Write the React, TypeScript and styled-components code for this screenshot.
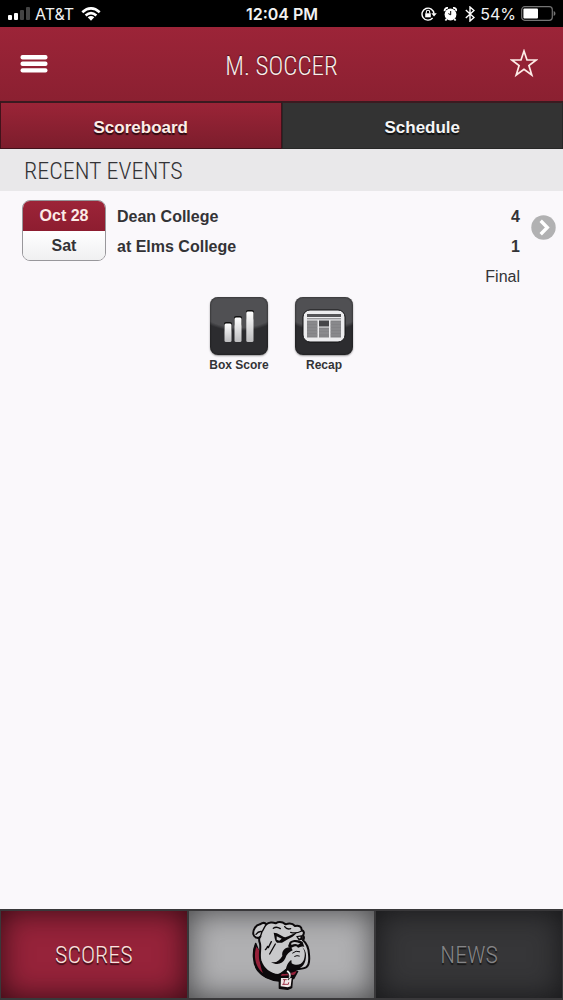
import React from 'react';
import styled, { createGlobalStyle } from 'styled-components';

const sans = `"Liberation Sans", Arial, sans-serif`;
const narrow = `"Liberation Sans Narrow", "Roboto Condensed", Roboto, sans-serif`;

const GlobalStyle = createGlobalStyle`
  * { box-sizing: border-box; }
  body { margin: 0; background: #faf8fb; color: #333336; font-family: ${sans}; }
  button { font: inherit; color: inherit; border: 0; padding: 0; background: none; cursor: pointer; }
  a { color: inherit; text-decoration: none; }
  h1, h2, p { margin: 0; font-weight: 400; }
  svg { display: block; }
`;

const Page = styled.div`
  display: flex;
  flex-direction: column;
  min-height: 100vh;
`;

const StatusBar = styled.div`
  display: grid;
  grid-template-columns: 1fr auto 1fr;
  align-items: center;
  height: 27px;
  padding: 0 7px 0 8px;
  background: #000;
  color: #f2f2f2;
  font-family: Inter, sans-serif;
  font-size: 16px;
`;

const StatusGroup = styled.div<{ $end?: boolean }>`
  display: flex;
  align-items: center;
  gap: 5px;
  justify-content: ${(p) => (p.$end ? 'flex-end' : 'flex-start')};
`;

const Clock = styled.span`
  font-weight: 600;
`;

const Header = styled.header`
  display: grid;
  grid-template-columns: 48px 1fr 48px;
  align-items: center;
  height: 74px;
  padding: 0 10px;
  background: linear-gradient(#9c2438, #8b2031);
  color: #fbeeea;
`;

const IconButton = styled.button<{ $end?: boolean }>`
  display: flex;
  align-items: center;
  justify-content: ${(p) => (p.$end ? 'flex-start' : 'center')};
  padding-left: ${(p) => (p.$end ? 5 : 0)}px;
  height: 48px;
`;

const Title = styled.h1`
  padding-top: 5px;
  font-family: ${narrow};
  font-size: 25px;
  font-weight: 300;
  line-height: 32px;
  text-align: center;
  text-shadow: 0 -1px 1px #42131c;
`;

const Tabs = styled.nav`
  display: grid;
  grid-template-columns: 1fr 1fr;
  height: 48px;
`;

const Tab = styled.button<{ $active?: boolean }>`
  border: 1px solid ${(p) => (p.$active ? '#41121b' : '#272727')};
  border-top: 2px solid #3b1a20;
  background: ${(p) => (p.$active ? 'linear-gradient(#9b2437, #7c1d2c)' : '#333333')};
  color: ${(p) => (p.$active ? '#fdeee8' : '#f5f5f5')};
  font-size: 17px;
  font-weight: 700;
  line-height: 24px;
  padding-top: 4px;
  text-shadow: 0 2px 1px rgba(0, 0, 0, 0.7);
`;

const SectionTitle = styled.h2`
  height: 42px;
  padding: 2px 24px 0;
  background: #e9e8ea;
  font-family: ${narrow};
  font-size: 24px;
  font-weight: 300;
  line-height: 40px;
`;

const Main = styled.main`
  flex: 1;
`;

const Event = styled.article`
  display: grid;
  grid-template-columns: 84px 1fr 25px;
  column-gap: 11px;
  padding: 9px 7px 0 22px;
`;

const DateBadge = styled.time`
  display: flex;
  flex-direction: column;
  align-self: start;
  height: 61px;
  overflow: hidden;
  border: 1px solid #98979b;
  border-radius: 8px;
  font-size: 16px;
  font-weight: 700;
  text-align: center;
`;

const DateTop = styled.span`
  flex: 1;
  background: linear-gradient(#9c2438, #8d1d30);
  color: #fbeae6;
  line-height: 30px;
`;

const DateBottom = styled.span`
  flex: 1;
  background: linear-gradient(#ffffff, #efeff0);
  line-height: 30px;
`;

const Results = styled.div`
  padding-top: 2px;
  font-size: 16px;
  line-height: 30px;
`;

const TeamRow = styled.div`
  display: flex;
  justify-content: space-between;
  font-weight: 700;
`;

const Outcome = styled.p`
  text-align: right;
`;

const MoreButton = styled.button`
  align-self: start;
  margin-top: 15px;
`;

const Actions = styled.div`
  display: flex;
  justify-content: center;
  gap: 23px;
  padding-top: 5px;
`;

const Action = styled.button`
  display: flex;
  flex-direction: column;
  align-items: center;
  width: 62px;
  font-size: 12px;
  font-weight: 700;
  line-height: 16px;
  white-space: nowrap;
`;

const Tile = styled.span`
  display: flex;
  align-items: center;
  justify-content: center;
  width: 58px;
  height: 58px;
  margin-bottom: 2px;
  border-radius: 8px;
  background: radial-gradient(ellipse 52px 34px at 50% 0, #505053 0 90%, #2c2c2f 100%);
  box-shadow: inset 0 0 2px #111, 0 1px 2px rgba(0, 0, 0, 0.4);
`;

const Footer = styled.nav`
  display: grid;
  grid-template-columns: repeat(3, 1fr);
  height: 91px;
  padding: 1px 0;
  background: #39383a;
`;

const tones = {
  red: ['#96233a', '#340a13', '#f7e3df'],
  silver: ['#b0b0b2', '#434345', '#222222'],
  dark: ['#363638', '#161618', '#858587'],
};

const FooterLink = styled.a<{ $tone: keyof typeof tones }>`
  display: flex;
  align-items: center;
  justify-content: center;
  padding-top: 1px;
  border: 1px solid #39383a;
  background: ${(p) => tones[p.$tone][0]};
  box-shadow: inset 0 0 30px ${(p) => tones[p.$tone][1]};
  color: ${(p) => tones[p.$tone][2]};
  font-family: ${narrow};
  font-size: 24px;
  font-weight: 300;
  line-height: 32px;
  text-shadow: 0 2px 1px rgba(0, 0, 0, 0.6);
`;

const Signal = () => (
  <svg width="22" height="14" viewBox="0 0 22 14" fill="#fff">
    <rect y="8" width="4" height="5" rx="1" />
    <rect x="6" y="6" width="4" height="7" rx="1" />
    <rect x="12" y="3" width="4" height="10" rx="1" fill="#444" />
    <rect x="18" width="4" height="13" rx="1" fill="#444" />
  </svg>
);

const Wifi = () => (
  <svg width="24" height="14" viewBox="-2 0 24 14" fill="none" stroke="#fff" strokeWidth="2.6">
    <path d="M1.3 5.2Q10-2.5 18.7 5.2M4.6 8.5Q10 3.8 15.4 8.5" />
    <path d="M6.7 10.3Q10 7.6 13.3 10.3L10 13.8Z" fill="#fff" stroke="none" />
  </svg>
);

const RotationLock = () => (
  <svg width="16" height="14" viewBox="0 0 16 14" fill="none" stroke="#fff" strokeWidth="1.4">
    <path d="M11.6 11A6 6 0 1 1 13 6.6" />
    <path d="M10.3 6.2H15.8L13 9.6Z" fill="#fff" stroke="none" />
    <rect x="4.2" y="6.3" width="5.6" height="4" fill="#fff" stroke="none" />
    <path d="M5.3 6.5V5a1.7 1.7 0 0 1 3.4 0V6.5" strokeWidth="1.1" />
  </svg>
);

const Alarm = () => (
  <svg width="15" height="14" viewBox="-2 0 15 14">
    <circle cx="6.5" cy="7.5" r="5.9" fill="#fff" />
    <path d="M.6 4.2A3 3 0 0 1 4 .9M12.4 4.2A3 3 0 0 0 9 .9M2.6 12L1.4 13.5M10.4 12L11.6 13.5" fill="none" stroke="#fff" strokeWidth="1.8" />
    <path d="M6.7 4V7.8L4.3 6.6" fill="none" stroke="#000" strokeWidth="1" />
  </svg>
);

const Bluetooth = () => (
  <svg width="13" height="16" viewBox="-3 0 13 16" fill="none" stroke="#fff" strokeWidth="1.4">
    <path d="M.8 4L9 11.5L5 15V1L9 4.5L.8 12" />
  </svg>
);

const Battery = () => (
  <svg width="35" height="15" viewBox="0 0 35 15">
    <rect x=".7" y=".7" width="30.6" height="13.6" rx="3" fill="none" stroke="#747474" strokeWidth="1.2" />
    <rect x="2.4" y="2.4" width="14.6" height="10.2" rx="1" fill="#fff" />
    <path d="M32.7 5C35 5.8 35 9.2 32.7 10Z" fill="#747474" />
  </svg>
);

const Menu = () => (
  <svg width="28" height="20" viewBox="0 0 28 20" fill="#fff">
    <rect x=".5" y="1" width="27" height="4.4" rx="2" />
    <rect x=".5" y="7.6" width="27" height="4.4" rx="2" />
    <rect x=".5" y="14.2" width="27" height="4.4" rx="2" />
  </svg>
);

const Star = () => (
  <svg width="28" height="30" viewBox="0 0 28 30" fill="none" stroke="#fdebe7" strokeWidth="1.7">
    <path d="M14 2L17 11H26.2L18.9 16.6L21.8 26L14 20.4L6.2 26L9.1 16.6L1.8 11H11Z" />
  </svg>
);

const Chevron = () => (
  <svg width="25" height="25" viewBox="0 0 25 25">
    <circle cx="12.5" cy="12.5" r="12.2" fill="#b1b1b2" />
    <path d="M9.7 5.8L16.3 12.5L9.7 19.2" fill="none" stroke="#fff" strokeWidth="3.4" />
  </svg>
);

const Bars = () => (
  <svg width="30" height="33" viewBox="0 0 30 33">
    <defs>
      <linearGradient id="bar" x1="0" y1="0" x2="0" y2="1">
        <stop offset="0" stopColor="#fff" />
        <stop offset="1" stopColor="#bcbcbe" />
      </linearGradient>
    </defs>
    <g fill="#111">
      <rect y="12" width="8" height="10" rx="2" />
      <rect x="10" y="6" width="8" height="10" rx="2" />
      <rect x="22" width="8" height="10" rx="2" />
    </g>
    <g fill="url(#bar)">
      <rect x=".5" y="13.5" width="7" height="18.5" rx="1.5" />
      <rect x="10.5" y="7.5" width="7" height="24.5" rx="1.5" />
      <rect x="22.3" y="1.5" width="7.2" height="30.5" rx="1.5" />
    </g>
  </svg>
);

const Newspaper = () => (
  <svg width="44" height="34" viewBox="0 0 44 34">
    <rect x="1" y="1" width="42" height="32" rx="7" fill="#ececee" stroke="#131315" />
    <rect x="5" y="5" width="34" height="3" fill="#555558" />
    <path d="M5 9.8H39" stroke="#77777a" strokeWidth="1" />
    <g fill="#838386">
      <path d="M5 11.5H15.5V28.5H5ZM17 18.5H27V28.5H17ZM28.5 11.5H39V28.5H28.5Z" />
    </g>
    <rect x="17" y="11.5" width="10" height="6" fill="#454548" />
    <path d="M5 14H15.5M5 17H15.5M5 20H15.5M5 23H15.5M5 26H15.5M17 21H27M17 24H27M28.5 14H39M28.5 17H39M28.5 20H39M28.5 23H39M28.5 26H39" stroke="#98989b" strokeWidth=".6" />
  </svg>
);

const Bulldog = () => (
  <svg width="60" height="70" viewBox="52 42 180 210" strokeLinecap="round" strokeLinejoin="round">
    {/* collar and outer silhouette */}
    <path d="M66 112C56 134 56 172 72 194C86 212 108 223 136 225L180 218L192 196L160 186L90 172Z" fill="#0c090b" stroke="#0c090b" strokeWidth="4" />
    <path d="M68 122C60 146 62 180 88 202C80 183 76 160 81 138Z" fill="#96213a" />
    <path d="M140 202C153 207 167 203 189 195L184 205C169 212 149 213 142 209Z" fill="#96213a" />
    {/* head */}
    <path d="M80 92C73 99 62 95 59 85C57 72 66 57 79 55C86 50 94 50 98 55C105 48 118 48 126 52C136 46 148 49 156 55C167 51 178 53 184 60C196 57 204 62 204 72C212 75 212 82 208 88C212 93 211 99 208 103C219 112 225 127 226 145C228 164 224 180 217 184C205 190 190 189 181 189L164 188C153 192 148 202 134 207C109 205 88 189 80 163C76 146 82 126 79 113C75 103 76 96 80 92Z" fill="#c9c9cb" stroke="#0c090b" strokeWidth="6" />
    {/* ear and forehead folds */}
    <path d="M80 92L85 77C78 75 72 78 67 85M85 77C91 69 92 62 97 57M119 67Q128 60 140 68M153 62Q160 72 171 68M171 79Q187 84 204 75" fill="none" stroke="#0c090b" strokeWidth="4" />
    {/* brow and eyes */}
    <path d="M120 80C134 80 143 91 155 94C166 91 181 82 191 79C184 89 170 97 160 101L145 110L130 110C122 103 123 91 120 80Z" fill="#0c090b" />
    <path d="M129 91L144 98L137 104L129 101Z" fill="#c9c9cb" />
    <path d="M187 91L207 87L208 101L195 103Z" fill="#0c090b" />
    <path d="M192 93L201 92L199 98Z" fill="#d8d8da" />
    {/* nose */}
    <path d="M168 108C180 98 199 102 207 108L212 123C203 119 199 124 193 125C187 117 179 121 171 127L163 121Z" fill="#0c090b" />
    <path d="M173 111C184 105 191 110 200 112L193 116C187 113 180 114 173 117Z" fill="#c9c9cb" />
    {/* jowls and jaw */}
    <path d="M172 123C153 123 143 135 146 150C138 164 127 172 112 168C130 180 147 174 155 157C158 145 168 137 177 133Z" fill="#0c090b" />
    <path d="M206 124C215 135 215 149 210 163C203 178 187 180 174 172L173 162C163 168 156 182 156 198L163 189L188 190C206 187 217 172 217 148Q216 132 206 124Z" fill="#0c090b" />
    <path d="M113 107L104 125M125 114L108 144M102 121Q100 127 95 131" fill="none" stroke="#0c090b" strokeWidth="4" />
    <path d="M177 141Q187 132 198 137M183 151Q190 147 197 150" fill="none" stroke="#0c090b" strokeWidth="3" />
    {/* fang and tag */}
    <path d="M137 212L177 209L174 245L162 250L137 247Z" fill="#0c090b" stroke="#0c090b" strokeWidth="4" />
    <path d="M142 216H174L171 241L162 244L141 241Z" fill="#f0e8e8" />
    <path d="M153 221L150 235H164L165 230M149 221H158M147 235H151" fill="none" stroke="#a0384c" strokeWidth="3" />
    <path d="M162 192C175 199 176 215 163 222C168 210 166 202 158 197Z" fill="#f5f5f5" stroke="#0c090b" strokeWidth="2" />
  </svg>
);

const teams = [
  { name: 'Dean College', score: 4 },
  { name: 'at Elms College', score: 1 },
];

export default function App() {
  return (
    <Page>
      <GlobalStyle />
      <StatusBar>
        <StatusGroup>
          <Signal />
          <span>AT&amp;T</span>
          <Wifi />
        </StatusGroup>
        <Clock>12:04 PM</Clock>
        <StatusGroup $end>
          <RotationLock />
          <Alarm />
          <Bluetooth />
          <span>54%</span>
          <Battery />
        </StatusGroup>
      </StatusBar>
      <Header>
        <IconButton aria-label="Menu"><Menu /></IconButton>
        <Title>M. SOCCER</Title>
        <IconButton $end aria-label="Favorite"><Star /></IconButton>
      </Header>
      <Tabs>
        <Tab $active>Scoreboard</Tab>
        <Tab>Schedule</Tab>
      </Tabs>
      <Main>
        <SectionTitle>RECENT EVENTS</SectionTitle>
        <Event>
          <DateBadge>
            <DateTop>Oct 28</DateTop>
            <DateBottom>Sat</DateBottom>
          </DateBadge>
          <Results>
            {teams.map((team) => (
              <TeamRow key={team.name}>
                <span>{team.name}</span>
                <span>{team.score}</span>
              </TeamRow>
            ))}
            <Outcome>Final</Outcome>
          </Results>
          <MoreButton aria-label="Event details"><Chevron /></MoreButton>
        </Event>
        <Actions>
          <Action><Tile><Bars /></Tile>Box Score</Action>
          <Action><Tile><Newspaper /></Tile>Recap</Action>
        </Actions>
      </Main>
      <Footer>
        <FooterLink href="#scores" $tone="red">SCORES</FooterLink>
        <FooterLink href="#home" $tone="silver" aria-label="Home"><Bulldog /></FooterLink>
        <FooterLink href="#news" $tone="dark">NEWS</FooterLink>
      </Footer>
    </Page>
  );
}
